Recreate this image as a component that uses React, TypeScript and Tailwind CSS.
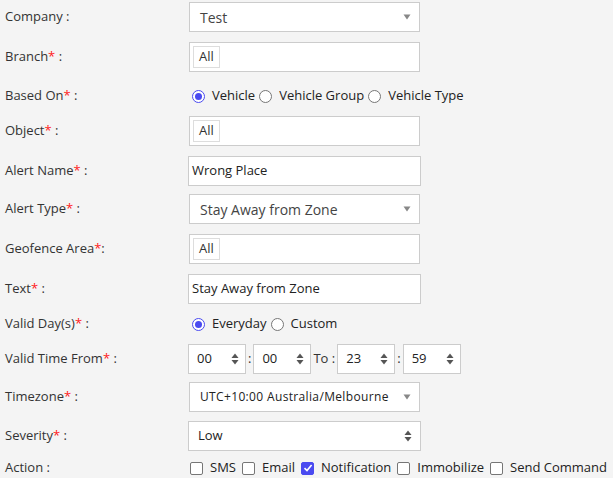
import type { ReactNode } from 'react';

const font = { fontFamily: '"Open Sans", "Liberation Sans", sans-serif' };

function Req() {
  return <span className="text-[#ff1a1a]">*</span>;
}

function Row({
  label,
  className,
  children,
}: {
  label: ReactNode;
  className: string;
  children: ReactNode;
}) {
  return (
    <div className={`flex items-center ${className}`}>
      <div className="w-[188px] shrink-0 pl-[5px] text-[13px] text-[#333]">{label}</div>
      <div className="flex items-center">{children}</div>
    </div>
  );
}

function DownArrow() {
  return (
    <svg width="8" height="6" viewBox="0 0 8 6" className="shrink-0">
      <path d="M0.5 0.5h7L4 5.5z" fill="#888" />
    </svg>
  );
}

function UpDown() {
  return (
    <svg width="8" height="12" viewBox="0 0 8 12" className="shrink-0">
      <path d="M0.5 5L4 0.5L7.5 5z" fill="#555" />
      <path d="M0.5 7h7L4 11.5z" fill="#555" />
    </svg>
  );
}

function Select({ value, className = '' }: { value: string; className?: string }) {
  return (
    <div className="ml-[1px] flex h-[30px] w-[231px] items-center justify-between border border-[#cccccc] bg-white pl-[10px] pr-[8px] text-[14px] text-[#444]">
      <span className={className}>{value}</span>
      <DownArrow />
    </div>
  );
}

function TagBox() {
  return (
    <div className="ml-[1px] flex h-[30px] w-[231px] items-center border border-[#cccccc] bg-white pl-[3px]">
      <span className="flex h-[22px] items-center border border-[#dddddd] px-[5px] text-[13px] text-[#333]">
        All
      </span>
    </div>
  );
}

function TextBox({ value }: { value: string }) {
  return (
    <div className="flex h-[30px] w-[233px] items-center border border-[#cccccc] bg-white pl-[3px] text-[13px] text-[#222]">
      {value}
    </div>
  );
}

function TimeBox({ value }: { value: string }) {
  return (
    <div className="flex h-[30px] w-[58px] items-center justify-between border border-[#cccccc] bg-white pl-[8px] pr-[6px] text-[13px] text-[#222]">
      <span>{value}</span>
      <UpDown />
    </div>
  );
}

function Radio({ checked, label }: { checked?: boolean; label: string }) {
  return (
    <label className="flex items-center text-[13px] text-[#222]">
      <span
        className={`mr-[7px] ml-[4px] flex h-[13px] w-[13px] items-center justify-center rounded-full border ${
          checked ? 'border-[#4a4af0]' : 'border-[#767676]'
        } bg-white`}
      >
        {checked && <span className="h-[7px] w-[7px] rounded-full bg-[#4a4af0]" />}
      </span>
      {label}
    </label>
  );
}

function Check({ checked, label }: { checked?: boolean; label: string }) {
  return (
    <label className="mr-[4px] flex items-center text-[13px] text-[#222]">
      <span
        className={`mr-[7px] ml-[2px] flex h-[13px] w-[13px] items-center justify-center rounded-[2px] border ${
          checked ? 'border-[#4a4af0] bg-[#4a4af0]' : 'border-[#767676] bg-white'
        }`}
      >
        {checked && (
          <svg width="10" height="10" viewBox="0 0 10 10">
            <path d="M1.5 5.2L4 7.6L8.6 2" stroke="white" strokeWidth="1.6" fill="none" />
          </svg>
        )}
      </span>
      {label}
    </label>
  );
}

export default function App() {
  return (
    <div className="h-[478px] w-[613px] overflow-hidden bg-[#f4f4f4]" style={font}>
      <Row label="Company :" className="mt-[2px] h-[30px]">
        <Select value="Test" />
      </Row>
      <Row label={<>Branch<Req /> :</>} className="mt-[10px] h-[30px]">
        <TagBox />
      </Row>
      <Row label={<>Based On<Req /> :</>} className="mt-[10px] h-[28px]">
        <Radio checked label="Vehicle" />
        <Radio label="Vehicle Group" />
        <Radio label="Vehicle Type" />
      </Row>
      <Row label={<>Object<Req /> :</>} className="mt-[6px] h-[30px]">
        <TagBox />
      </Row>
      <Row label={<>Alert Name<Req /> :</>} className="mt-[10px] h-[30px]">
        <TextBox value="Wrong Place" />
      </Row>
      <Row label={<>Alert Type<Req /> :</>} className="mt-[8px] h-[30px]">
        <Select value="Stay Away from Zone" />
      </Row>
      <Row label={<>Geofence Area<Req />:</>} className="mt-[10px] h-[30px]">
        <TagBox />
      </Row>
      <Row label={<>Text<Req /> :</>} className="mt-[10px] h-[30px]">
        <TextBox value="Stay Away from Zone" />
      </Row>
      <Row label={<>Valid Day(s)<Req /> :</>} className="mt-[10px] h-[20px]">
        <Radio checked label="Everyday" />
        <Radio label="Custom" />
      </Row>
      <Row label={<>Valid Time From<Req /> :</>} className="mt-[10px] h-[30px]">
        <TimeBox value="00" />
        <span className="mx-[2px] text-[13px] text-[#333]">:</span>
        <TimeBox value="00" />
        <span className="mx-[2px] text-[13px] text-[#333]">To :</span>
        <TimeBox value="23" />
        <span className="mx-[2px] text-[13px] text-[#333]">:</span>
        <TimeBox value="59" />
      </Row>
      <Row label={<>Timezone<Req /> :</>} className="mt-[8px] h-[30px]">
        <Select value="UTC+10:00 Australia/Melbourne" className="text-[12px] tracking-[0.35px] text-[#222]" />
      </Row>
      <Row label={<>Severity<Req /> :</>} className="mt-[9px] h-[30px]">
        <div className="flex h-[30px] w-[233px] items-center justify-between border border-[#cccccc] bg-white pl-[9px] pr-[8px] text-[13px] text-[#222]">
          <span>Low</span>
          <UpDown />
        </div>
      </Row>
      <Row label="Action :" className="mt-[7px] h-[20px]">
        <Check label="SMS" />
        <Check label="Email" />
        <Check checked label="Notification" />
        <Check label="Immobilize" />
        <Check label="Send Command" />
      </Row>
    </div>
  );
}
